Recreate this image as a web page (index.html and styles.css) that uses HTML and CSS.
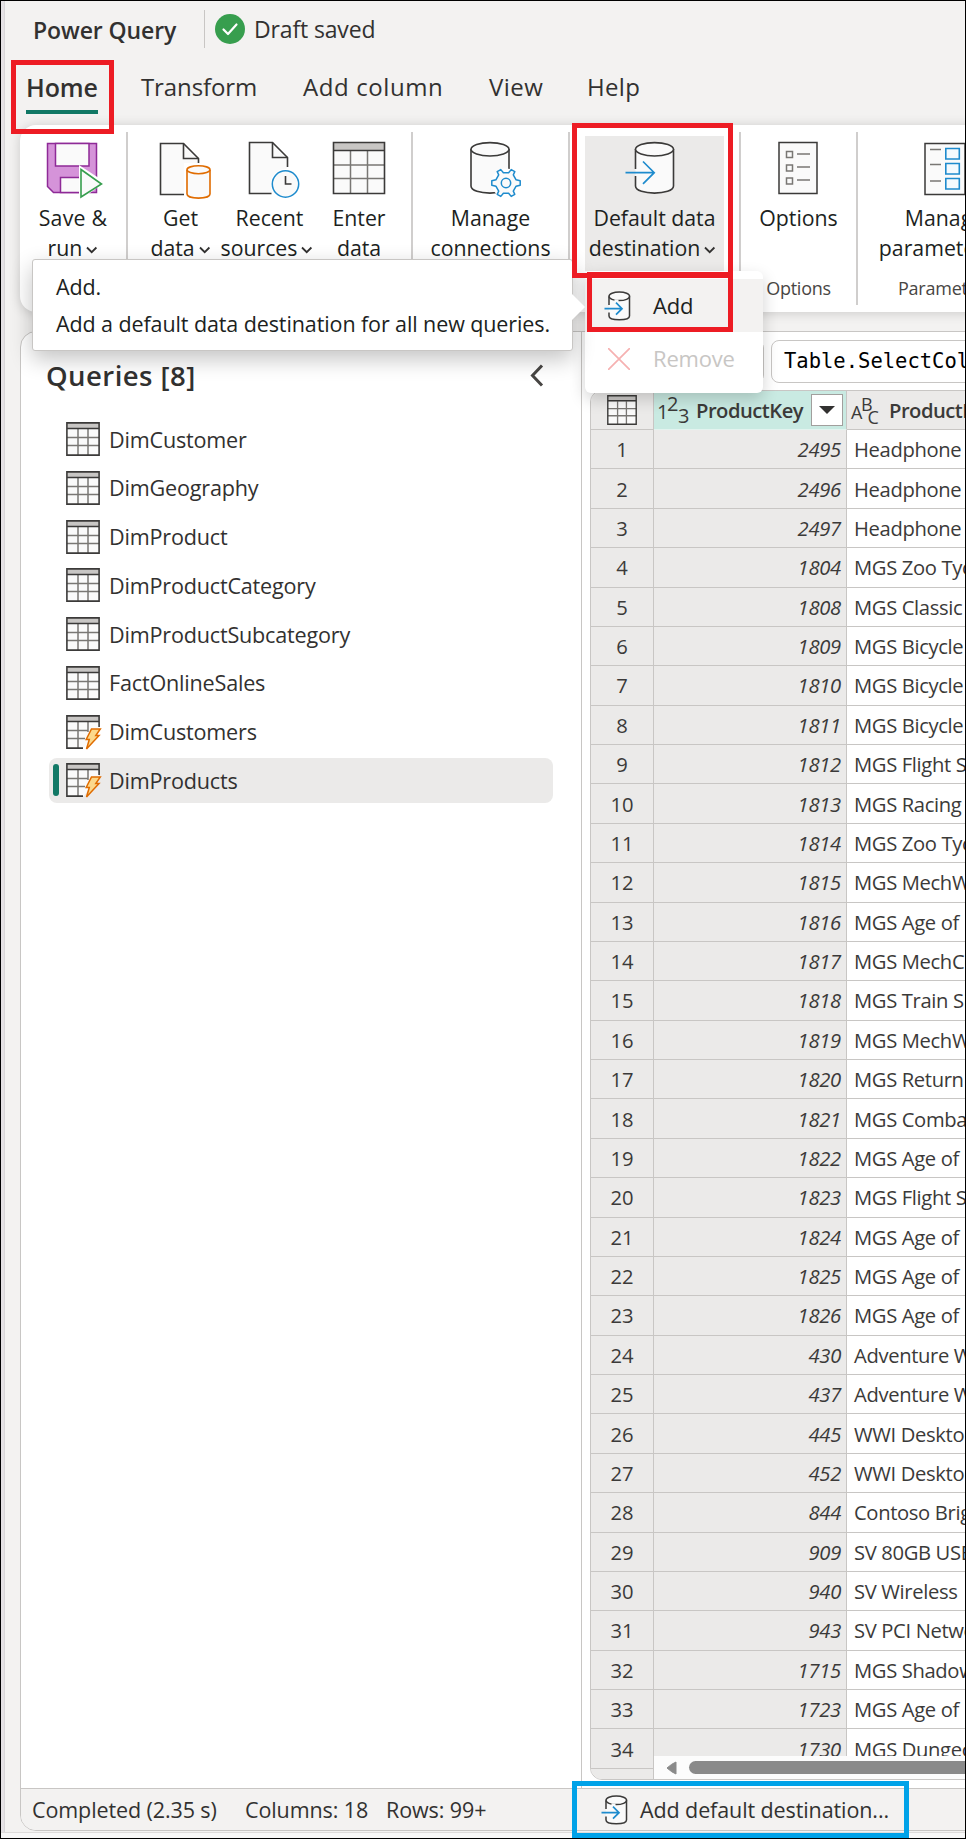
FILE: index.html
```html
<!DOCTYPE html>
<html lang="en">
<head>
<meta charset="utf-8">
<title>Power Query</title>
<link rel="stylesheet" href="styles.css">
</head>
<body>
<svg class="defs" width="0" height="0">
  <defs>
    <symbol id="table" viewBox="0 0 34 34">
      <path d="M1 1H33V33H1Z" fill="#fafafa"/>
      <path d="M1 1H33V7H1Z" fill="#c8c6c4"/>
      <path d="M12 7V33M22 7V33M1 15.5H33M1 23.5H33" stroke="#797774" stroke-width="1.5" fill="none"/>
      <path d="M.9 .9H33.1V33.1H.9ZM1 6.5H33" stroke="#3b3a39" stroke-width="1.6" fill="none"/>
    </symbol>
    <symbol id="table-bolt" viewBox="0 0 36 36">
      <path d="M1 1H33V17L27 20L18 33H1Z" fill="#fafafa"/>
      <path d="M1 1H33V7H1Z" fill="#c8c6c4"/>
      <path d="M12 7V33M22 7V17M1 15.5H22M1 23.5H19" stroke="#797774" stroke-width="1.5" fill="none"/>
      <path d="M17 33.1H.9V.9H33.1V12M1 6.5H33" stroke="#3b3a39" stroke-width="1.6" fill="none"/>
      <path d="M25.500 14H34.300L29.800 20.500H33L20.500 34L23.300 24.500H20.200Z" fill="#fcd98c" stroke="#e06c00" stroke-width="1.5"/>
    </symbol>
    <symbol id="db-in" viewBox="0 0 28 30">
      <path d="M5 5.500V25C5 30 25.500 30 25.500 25V5.500" fill="#fafafa"/>
      <ellipse cx="15.300" cy="5.300" rx="10.300" ry="4.300" fill="#fafafa" stroke="#3b3a39" stroke-width="1.500"/>
      <path d="M5 5.500V14M5 21.500V25C5 30 25.500 30 25.500 25V5.500" fill="none" stroke="#3b3a39" stroke-width="1.500"/>
      <path d="M10.500 8.500L14.500 8.500V13L10 15Z" fill="#fafafa"/>
      <path d="M.5 17.700H17.800M12 11.700L18 17.700L12 23.700" fill="none" stroke="#1e8bcd" stroke-width="1.700"/>
    </symbol>
    <symbol id="chev" viewBox="0 0 12 8"><path d="M1 1.500L5.700 6.200L10.400 1.500" fill="none" stroke="#323130" stroke-width="1.800"/></symbol>
  </defs>
</svg>
<div class="app">
  <header class="titlebar">
    <span class="product">Power Query</span>
    <span class="rule"></span>
    <svg class="ok" viewBox="0 0 30 30"><circle cx="15" cy="15" r="15" fill="#379e4e"/><path d="M8.500 15.500L13 20L21.500 10.500" fill="none" stroke="#fff" stroke-width="2.200" stroke-linecap="round" stroke-linejoin="round"/></svg>
    <span class="draft">Draft saved</span>
  </header>
  <nav class="tabs">
    <span class="tab on">Home</span><span class="tab t2">Transform</span><span class="tab t3">Add column</span><span class="tab t4">View</span><span class="tab t5">Help</span>
  </nav>

  <section class="ribbon">
    <div class="group g1"><div class="buttons">
      <div class="btn w-save">
        <svg class="ico" viewBox="43 140 60 60">
          <path d="M47.500 143.500H96.500V192.500H53.500L47.500 186.500Z" fill="#d593d9" stroke="#8e2a97" stroke-width="1.500"/>
          <path d="M55.500 143.500H89V166H55.500ZM60.500 192.500V177.500H84V192.500Z" fill="#fafafa" stroke="#8e2a97" stroke-width="1.500"/>
          <path d="M79 165L105 182L79 201Z" fill="#fff"/>
          <path d="M81 169.500L101.500 184L81 197Z" fill="#fafafa" stroke="#379e4e" stroke-width="1.600"/>
        </svg>
        <span class="save">Save &amp;</span><span>run<svg class="chev"><use href="#chev"/></svg></span>
      </div>
    </div></div>
    <div class="group g2"><div class="buttons">
      <div class="btn w-get">
        <svg class="ico" viewBox="150.500 140 60 60">
          <path d="M183.500 194.500H160V143.500H183L198 158.500V166" fill="#fafafa" stroke="#3b3a39" stroke-width="1.600"/>
          <path d="M183 143.500V158.500H198" fill="none" stroke="#3b3a39" stroke-width="1.600"/>
          <path d="M183.500 163H212V200H183.500Z" fill="#fff"/>
          <path d="M186.500 170V194C186.500 199.500 209.500 199.500 209.500 194V170" fill="#fafafa" stroke="#e06c00" stroke-width="1.600"/>
          <ellipse cx="198" cy="169.700" rx="11.500" ry="4" fill="#fafafa" stroke="#e06c00" stroke-width="1.600"/>
        </svg>
        <span>Get</span><span>data<svg class="chev"><use href="#chev"/></svg></span>
      </div>
      <div class="btn w-recent">
        <svg class="ico" viewBox="239.500 140 60 60">
          <path d="M271 193.500H249V142.500H272L287 157.500V167" fill="#fafafa" stroke="#3b3a39" stroke-width="1.600"/>
          <path d="M272 142.500V157.500H287" fill="none" stroke="#3b3a39" stroke-width="1.600"/>
          <circle cx="285" cy="184" r="15" fill="#fff"/>
          <circle cx="285" cy="184" r="13.200" fill="#fafafa" stroke="#1e8bcd" stroke-width="1.500"/>
          <path d="M285 176V184H291" fill="none" stroke="#3b3a39" stroke-width="1.600"/>
        </svg>
        <span>Recent</span><span class="src">sources<svg class="chev"><use href="#chev"/></svg></span>
      </div>
      <div class="btn w-enter">
        <svg class="ico" viewBox="329 140 60 60">
          <path d="M333.500 142.500H384.500V193.500H333.500Z" fill="#fafafa"/>
          <path d="M333.500 142.500H384.500V150.500H333.500Z" fill="#c8c6c4"/>
          <path d="M350.500 150V193M367.500 150V193M334 165H384M334 178.500H384" stroke="#797774" stroke-width="1.500"/>
          <path d="M333.500 142.500H384.500V193.500H333.500ZM333.500 150.500H384.500" fill="none" stroke="#3b3a39" stroke-width="1.600"/>
        </svg>
        <span>Enter</span><span>data</span>
      </div>
    </div></div>
    <div class="group g3"><div class="buttons">
      <div class="btn w-manage">
        <svg class="ico" viewBox="461 140 60 60">
          <path d="M471 149V186C471 195.500 509 195.500 509 186V149" fill="#fafafa" stroke="#3b3a39" stroke-width="1.600"/>
          <ellipse cx="490" cy="149.300" rx="19" ry="6.700" fill="#fafafa" stroke="#3b3a39" stroke-width="1.600"/>
          <circle cx="506" cy="183" r="14.500" fill="#fff"/>
          <path d="M503.400 172.800L500.800 169.600L497.200 171.700L498.700 174.800L495.900 179.800L491.800 180.800V185.200L495.900 186.200L498.700 191.200L497.200 194.300L500.800 196.400L503.400 193.200H508.600L511.200 196.400L514.800 194.300L513.300 191.200L516.100 186.200L520.200 185.200V180.800L516.100 179.800L513.300 174.800L514.800 171.700L511.200 169.600L508.600 172.800Z" fill="#fafafa" stroke="#1e8bcd" stroke-width="1.500" stroke-linejoin="round"/>
          <circle cx="506" cy="183" r="4.700" fill="#fafafa" stroke="#1e8bcd" stroke-width="1.500"/>
        </svg>
        <span>Manage</span><span>connections</span>
      </div>
    </div></div>
    <div class="group g4"><div class="buttons">
      <div class="btn w-default active">
        <svg class="ico" viewBox="624.500 140 60 60">
          <path d="M635 149V186C635 195.500 673 195.500 673 186V149" fill="#fafafa"/>
          <path d="M635 149V169M635 176V186C635 195.500 673 195.500 673 186V149" fill="none" stroke="#3b3a39" stroke-width="1.600"/>
          <ellipse cx="654" cy="149.300" rx="19" ry="6.700" fill="#fafafa" stroke="#3b3a39" stroke-width="1.600"/>
          <path d="M625 172.700H654M642.500 161.500L653.700 172.700L642.500 183.900" fill="none" stroke="#1e8bcd" stroke-width="1.700"/>
        </svg>
        <span>Default data</span><span class="dst">destination<svg class="chev"><use href="#chev"/></svg></span>
      </div>
    </div></div>
    <div class="group g5"><div class="buttons">
      <div class="btn w-options">
        <svg class="ico" viewBox="768 140 60 60">
          <path d="M778 142.500H816V193.500H778Z" fill="#fafafa" stroke="#3b3a39" stroke-width="1.500"/>
          <path d="M785.500 151.500h6v6h-6zM785.500 165h6v6h-6zM785.500 178h6v6h-6zM796 154H809M796 167H809M796 180H809" fill="none" stroke="#797774" stroke-width="1.500"/>
        </svg>
        <span>Options</span>
      </div>
    </div><div class="caption">Options</div></div>
    <div class="group g6"><div class="buttons">
      <div class="btn w-params">
        <svg class="ico" viewBox="913 140 60 60">
          <path d="M923 143.500H963V194.500H923Z" fill="#fafafa" stroke="#3b3a39" stroke-width="1.500"/>
          <path d="M928 149.500H939M928 164.500H939M928 181H939" stroke="#797774" stroke-width="1.500"/>
          <path d="M943.800 148.500h13.500v10.500h-13.500zM943.800 163.500h13.500v10.500h-13.500zM943.800 178.500h13.500v10.500h-13.500z" fill="#f4fafe" stroke="#1e8bcd" stroke-width="1.600"/>
        </svg>
        <span>Manage</span><span>parameters<svg class="chev"><use href="#chev"/></svg></span>
      </div>
    </div><div class="caption">Parameters</div></div>
  </section>

  <section class="workspace">
    <div class="panes">
      <aside class="queries">
        <div class="qhead"><h2>Queries [8]</h2><svg class="collapse" viewBox="0 0 14 24"><path d="M12 1.500L2.500 11.500L12 21.500" fill="none" stroke="#484644" stroke-width="3"/></svg></div>
        <ul>
          <li><svg class="qi"><use href="#table"/></svg>DimCustomer</li>
          <li><svg class="qi"><use href="#table"/></svg>DimGeography</li>
          <li><svg class="qi"><use href="#table"/></svg>DimProduct</li>
          <li><svg class="qi"><use href="#table"/></svg>DimProductCategory</li>
          <li><svg class="qi"><use href="#table"/></svg>DimProductSubcategory</li>
          <li><svg class="qi"><use href="#table"/></svg>FactOnlineSales</li>
          <li><svg class="qb"><use href="#table-bolt"/></svg>DimCustomers</li>
          <li class="sel"><svg class="qb"><use href="#table-bolt"/></svg>DimProducts</li>
        </ul>
      </aside>
      <main class="data">
        <div class="formula"><div class="fx"></div><div class="code">Table.SelectColumns</div></div>
        <div class="grid" id="grid">
          <div class="row head">
            <div class="idx"><svg class="hi"><use href="#table"/></svg></div>
            <div class="key">
              <svg class="type" viewBox="0 0 32 30"><text x="-1" y="24" class="ty">1</text><text x="9" y="16" class="ty">2</text><text x="20" y="27.500" class="ty">3</text></svg>
              <b>ProductKey</b>
              <span class="drop"><svg viewBox="0 0 16 8"><path d="M0 0H16L8 8Z" fill="#323130"/></svg></span>
            </div>
            <div class="name"><svg class="type" viewBox="0 0 32 30"><text x="0" y="24" class="tl">A</text><text x="10" y="15.500" class="tl">B</text><text x="16.500" y="29" class="tl">C</text></svg><b>ProductName</b></div>
          </div>
        </div>
        <div class="hscroll"><svg viewBox="0 0 11 14"><path d="M10 1V13Q6 11.500 1 7Q6 2.500 10 1Z" fill="#8a8a8a" stroke="#8a8a8a"/></svg><span class="thumb"></span></div>
      </main>
    </div>
    <footer class="status"><span class="s1">Completed (2.35 s)</span><span class="s2">Columns: 18</span><span class="s3">Rows: 99+</span>
      <span class="dest"><svg class="dbi"><use href="#db-in"/></svg>Add default destination...</span></footer>
  </section>
  <div class="window-edge"></div>

  <div class="menu">
    <div class="mi hover"><svg class="dbi"><use href="#db-in"/></svg><span>Add</span></div>
    <div class="mi off"><svg class="x" viewBox="0 0 22 22"><path d="M0 0L22 22M22 0L0 22" stroke="#f6b1b1" stroke-width="1.700"/></svg><span>Remove</span></div>
  </div>
  <div class="tip"><p>Add.</p><p>Add a default data destination for all new queries.</p><i></i></div>
  <div class="mark m-home"></div>
  <div class="mark m-default"></div>
  <div class="mark m-add"></div>
  <div class="mark m-status"></div>
</div>
<script src="rows.js"></script>
</body>
</html>
```
FILE: rows.js
```js
const rows = [
  [2495, "Headphone"], [2496, "Headphone"], [2497, "Headphone"], [1804, "MGS Zoo Tyc"],
  [1808, "MGS Classic"], [1809, "MGS Bicycle"], [1810, "MGS Bicycle"], [1811, "MGS Bicycle"],
  [1812, "MGS Flight Si"], [1813, "MGS Racing"], [1814, "MGS Zoo Tyc"], [1815, "MGS MechWa"],
  [1816, "MGS Age of"], [1817, "MGS MechCo"], [1818, "MGS Train Sim"], [1819, "MGS MechWa"],
  [1820, "MGS Return"], [1821, "MGS Combat"], [1822, "MGS Age of"], [1823, "MGS Flight Si"],
  [1824, "MGS Age of"], [1825, "MGS Age of"], [1826, "MGS Age of"], [430, "Adventure W"],
  [437, "Adventure W"], [445, "WWI Desktop"], [452, "WWI Desktop"], [844, "Contoso Brig"],
  [909, "SV 80GB USB"], [940, "SV Wireless"], [943, "SV PCI Netwo"], [1715, "MGS Shadow"],
  [1723, "MGS Age of"], [1730, "MGS Dungeon"], ["", ""]
];
const grid = document.getElementById("grid");
rows.forEach(([key, name], i) => {
  const row = document.createElement("div");
  row.className = "row";
  [["idx", key === "" ? "" : i + 1], ["key", key], ["name", name]].forEach(([cls, text]) => {
    const cell = document.createElement("div");
    cell.className = cls;
    cell.textContent = text;
    row.appendChild(cell);
  });
  grid.appendChild(row);
});
```
FILE: styles.css
```css
* { box-sizing: border-box; }
html, body { margin: 0; }
body { width: 966px; height: 1839px; overflow: hidden; font-family: "Open Sans", "Noto Sans", sans-serif; color: #323130; background: #f3f2f1; }
.defs { position: absolute; }
svg { display: block; flex: none; }
.app { position: relative; width: 966px; height: 1839px; border: 1px solid #000; background: linear-gradient(90deg, #e4e1e4 0 3px, #d8d6d8 3px 4px, #f3f2f1 4px); overflow: hidden; display: flex; flex-direction: column; white-space: nowrap; }

.titlebar { display: flex; align-items: center; height: 56px; padding-left: 32px; flex: none; }
.product { font-weight: 600; font-size: 23px; letter-spacing: -.1px; width: 171px; padding-top: 1px; }
.rule { width: 1px; height: 38px; background: #c8c6c4; margin-right: 10px; }
.ok { width: 30px; height: 30px; margin-right: 9px; }
.draft { font-size: 23px; letter-spacing: -.15px; }

.tabs { display: flex; height: 68px; padding: 7px 0 0 25px; flex: none; font-size: 24px; line-height: 46px; }
.tab { height: 50px; }
.tab.on { font-weight: 600; border-bottom: 4px solid #117865; width: 72px; margin-right: 43px; font-size: 25px; letter-spacing: -.1px; }
.t2 { width: 162px; letter-spacing: -.1px; } .t3 { width: 186px; letter-spacing: .6px; } .t4 { width: 98px; letter-spacing: .5px; } .t5 { letter-spacing: .3px; }

.ribbon { display: flex; height: 187px; width: 960px; margin-left: 19px; flex: none; background: #fff; border-radius: 16px 0 0 16px; box-shadow: 0 1px 12px rgba(0,0,0,.17); padding-top: 7px; }
.group { height: 173px; border-right: 2px solid #d0cecd; flex: none; }
.g1 { width: 108px; } .g2 { width: 285px; padding-left: 8px; } .g3 { width: 157px; } .g4 { width: 171px; } .g5 { width: 117px; } .g6 { width: 175px; border: 0; }
.buttons { display: flex; height: 143px; padding-top: 4px; }
.btn { display: flex; flex-direction: column; align-items: center; font-size: 21.3px; line-height: 30px; letter-spacing: -.02px; color: #201f1e; height: 135px; }
.btn .ico { width: 60px; height: 60px; margin: 4px 0 3px; }
.btn span { display: flex; align-items: center; }
.btn .save { letter-spacing: .25px; }
.chev { width: 12px; height: 8px; margin: 4px 0 0 4px; }
.src { margin-left: -5px; } .dst { margin-left: -4px; }
.w-save { width: 106px; } .w-get, .w-recent { width: 89px; } .w-enter { width: 90px; }
.w-manage { width: 156px; } .w-default { width: 139px; margin-left: 15px; } .w-options { width: 116px; } .w-params { width: 173px; }
.active { background: #ebeae9; }
.caption { font-size: 18px; line-height: 26px; letter-spacing: -.25px; text-align: center; color: #484644; }

.workspace { margin: 19px 0 0 19px; height: 1500px; width: 960px; border: 1px solid #c8c6c4; border-radius: 16px 0 0 16px; background: #fff; flex: none; overflow: hidden; }
.panes { display: flex; height: 1456px; }
.queries { width: 561px; border-right: 1px solid #c8c6c4; flex: none; }
.qhead { display: flex; align-items: center; justify-content: space-between; height: 85px; padding: 2px 37px 0 25px; }
.qhead h2 { margin: 0; font-size: 27.5px; line-height: 40px; font-weight: 600; letter-spacing: .45px; }
.collapse { width: 14px; height: 24px; }
.queries ul { list-style: none; margin: 0; padding: 0 0 0 28px; display: flex; flex-direction: column; gap: 3.75px; }
.queries li { display: flex; align-items: center; height: 45px; width: 504px; padding: 0 0 1px 17px; font-size: 21.6px; letter-spacing: -.2px; border-radius: 8px; }
.qi { width: 34px; height: 34px; margin-right: 9px; }
.qb { width: 36px; height: 36px; margin: 2px 7px 0 0; }
.sel { background: #ebeae9; }
.queries .sel { padding-left: 4px; }
.sel::before { content: ""; width: 6px; height: 32px; border-radius: 3px; background: #117865; margin-right: 7px; }

.data { flex: 1; padding-left: 8px; }
.formula { display: flex; height: 58px; padding-top: 8px; }
.fx { width: 174px; height: 43px; border: 1px solid #c8c6c4; border-radius: 8px; margin-right: 7px; }
.code { width: 240px; height: 43px; border: 1px solid #c8c6c4; border-radius: 8px; padding-left: 12px; font: 20.5px/41px "DejaVu Sans Mono", monospace; color: #000; }
.grid { width: 400px; height: 1390px; overflow: hidden; border: 1px solid #c8c6c4; border-radius: 12px 0 0 12px; font-size: 20.2px; color: #3b3a39; }
.row { display: flex; height: 39.39px; }
.row > div { border-bottom: 1px solid #c8c6c4; display: flex; align-items: center; flex: none; }
.row .idx { width: 63px; justify-content: center; background: #ebeae9; border-right: 1px solid #c8c6c4; }
.row .key { width: 193px; justify-content: flex-end; padding-right: 5px; background: #ebeae9; border-right: 1px solid #c8c6c4; font-style: italic; letter-spacing: -.25px; }
.row .name { width: 150px; padding-left: 7px; letter-spacing: -.35px; }
.row.head { height: 39px; }
.head b { font-weight: 600; letter-spacing: -.5px; }
.row.head .key { background: #c9eae2; font-style: normal; justify-content: flex-start; padding-left: 4px; border-bottom-color: #e3f3ef; }
.row.head .name { background: #ebeae9; padding-left: 4px; }
.hi { width: 30px; height: 30px; }
.type { width: 32px; height: 30px; margin-right: 6px; overflow: visible; fill: #3b3a39; }
.ty { font-size: 20px; } .tl { font-size: 18px; }
.drop { margin-left: auto; margin-right: -2px; width: 32px; height: 32px; border: 1px solid #a19f9d; background: #fff; display: grid; place-items: center; }
.drop svg { width: 16px; height: 8px; }
.hscroll { position: relative; display: flex; align-items: center; margin: -24px 0 0 64px; height: 23px; background: #fcfcfc; padding-left: 12px; }
.hscroll svg { width: 11px; height: 14px; }
.thumb { margin-left: 12px; height: 13px; width: 400px; border-radius: 7px; background: #8a8a8a; flex: none; }

.status { display: flex; align-items: center; height: 42px; border-top: 1px solid #c8c6c4; background: #f3f2f1; font-size: 21.5px; letter-spacing: -.1px; padding-left: 11px; }
.s1 { width: 213px; } .s2 { width: 141px; } .s3 { width: 215px; }
.dest { display: flex; align-items: center; }
.dbi { width: 28px; height: 30px; }
.dest .dbi { margin-right: 11px; }
.window-edge { margin-top: 1px; height: 7px; flex: none; border-top: 1px solid #dedcdb; border-bottom: 1px solid #bdbbba; background: #f8f8f8; }

.menu { position: absolute; left: 584px; top: 270px; width: 178px; height: 122px; background: #fff; border-radius: 6px; padding-top: 8px; box-shadow: 0 6px 16px rgba(0,0,0,.18); font-size: 22px; letter-spacing: -.2px; color: #201f1e; }
.mi { display: flex; align-items: center; height: 53px; padding-left: 19px; }
.mi span { padding-bottom: 2px; }
.mi .dbi { margin-right: 21px; }
.hover { background: #f3f2f1; }
.off { color: #c8c6c4; padding-left: 23px; }
.x { width: 22px; height: 22px; margin-right: 23px; }

.tip { position: absolute; left: 31px; top: 258px; width: 541px; height: 92px; background: #fff; border: 1px solid #c8c6c4; border-radius: 3px; padding: 8px 0 0 23px; box-shadow: 0 8px 22px rgba(0,0,0,.24); font-size: 21.5px; line-height: 37px; letter-spacing: -.1px; color: #201f1e; }
.tip p { margin: 0; }
.tip i { position: absolute; left: 539px; top: 34px; width: 13px; height: 26px; background: #fff; clip-path: polygon(0 0, 100% 50%, 0 100%); }

.mark { position: absolute; border: 5px solid #ed1c24; }
.m-home { left: 10px; top: 59px; width: 103px; height: 74px; }
.m-default { left: 571px; top: 122px; width: 161px; height: 155px; }
.m-add { left: 586px; top: 271px; width: 146px; height: 60px; }
.m-status { left: 571px; top: 1780px; width: 337px; height: 57px; border-color: #00a2e8; }
```
